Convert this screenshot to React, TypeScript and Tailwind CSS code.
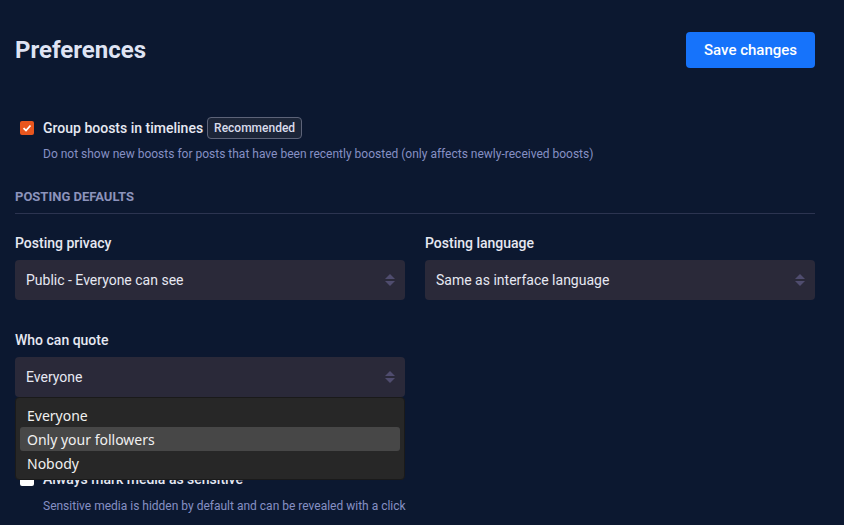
import React from "react";

function Arrows() {
  return (
    <svg width="10" height="14" viewBox="0 0 10 14" className="absolute right-[10px] top-1/2 -translate-y-1/2">
      <path d="M5 1 L10 6 L0 6 Z" fill="#4f4c6e" />
      <path d="M5 13 L10 8 L0 8 Z" fill="#4f4c6e" />
    </svg>
  );
}

function Select({ value }: { value: string }) {
  return (
    <div className="relative h-[40px] rounded-[4px] bg-[#2a2939] flex items-center pl-[11px] text-[14px] text-[#e6e8f2]">
      {value}
      <Arrows />
    </div>
  );
}

export default function App() {
  return (
    <div
      className="min-h-[525px] w-[844px] bg-[#0c1830] px-[15px] pt-[32px] overflow-hidden"
      style={{ fontFamily: "Roboto, 'Liberation Sans', sans-serif" }}
    >
      <div className="w-[800px]">
        <div className="flex items-center justify-between h-[36px]">
          <h1 className="text-[24px] font-bold text-[#dfe3f3] leading-none">Preferences</h1>
          <button className="h-[36px] w-[129px] rounded-[4px] bg-[#1673fb] text-white text-[15px] font-medium">
            Save changes
          </button>
        </div>

        <div className="mt-[49px] flex items-center h-[22px] pl-[5px]">
          <div className="w-[14px] h-[14px] rounded-[2px] bg-[#e9561e] flex items-center justify-center">
            <svg width="10" height="10" viewBox="0 0 10 10">
              <path d="M1.5 5.2 L4 7.5 L8.5 2.5" stroke="white" strokeWidth="1.8" fill="none" />
            </svg>
          </div>
          <span className="ml-[9px] text-[14px] font-medium text-[#e6e8f2]">Group boosts in timelines</span>
          <span className="ml-[4px] h-[22px] px-[6px] flex items-center rounded-[4px] border border-[#5d6378] bg-[#1c2538] text-[12px] font-medium text-[#d9dceb]">
            Recommended
          </span>
        </div>
        <div className="mt-[6px] pl-[28px] text-[12px] leading-[18px] text-[#8690c4]">
          Do not show new boosts for posts that have been recently boosted (only affects newly-received boosts)
        </div>

        <div className="mt-[26px] pb-[8px] border-b border-[#2c3450] text-[13px] leading-[16px] font-bold uppercase text-[#8c93bc]">
          Posting defaults
        </div>

        <div className="mt-[19px] grid grid-cols-2 gap-x-[20px]">
          <div>
            <div className="text-[14px] leading-[20px] font-medium text-[#e6e8f2] mb-[7px]">Posting privacy</div>
            <Select value="Public - Everyone can see" />
          </div>
          <div>
            <div className="text-[14px] leading-[20px] font-medium text-[#e6e8f2] mb-[7px]">Posting language</div>
            <Select value="Same as interface language" />
          </div>
          <div className="mt-[30px] relative">
            <div className="text-[14px] leading-[20px] font-medium text-[#e6e8f2] mb-[7px]">Who can quote</div>
            <Select value="Everyone" />
            <div
              className="absolute left-0 right-0 top-[67px] z-10 rounded-[4px] bg-[#272727] border border-[#1a1a1a] pt-[5px] pb-[4px] px-[4px] text-[14px] text-[#f0f0f0]"
              style={{ fontFamily: "'Noto Sans', 'Open Sans', sans-serif" }}
            >
              <div className="h-[24px] flex items-center px-[7px]">Everyone</div>
              <div className="h-[24px] flex items-center px-[7px] rounded-[3px] bg-[#474747]">Only your followers</div>
              <div className="h-[24px] flex items-center px-[7px]">Nobody</div>
            </div>
          </div>
        </div>

        <div className="mt-[72px] flex items-center h-[20px] pl-[5px]">
          <div className="w-[14px] h-[14px] rounded-[2px] bg-white" />
          <span className="ml-[9px] text-[14px] font-medium text-[#e6e8f2]">Always mark media as sensitive</span>
        </div>
        <div className="mt-[8px] pl-[28px] text-[12px] leading-[18px] text-[#8690c4]">
          Sensitive media is hidden by default and can be revealed with a click
        </div>
      </div>
    </div>
  );
}
